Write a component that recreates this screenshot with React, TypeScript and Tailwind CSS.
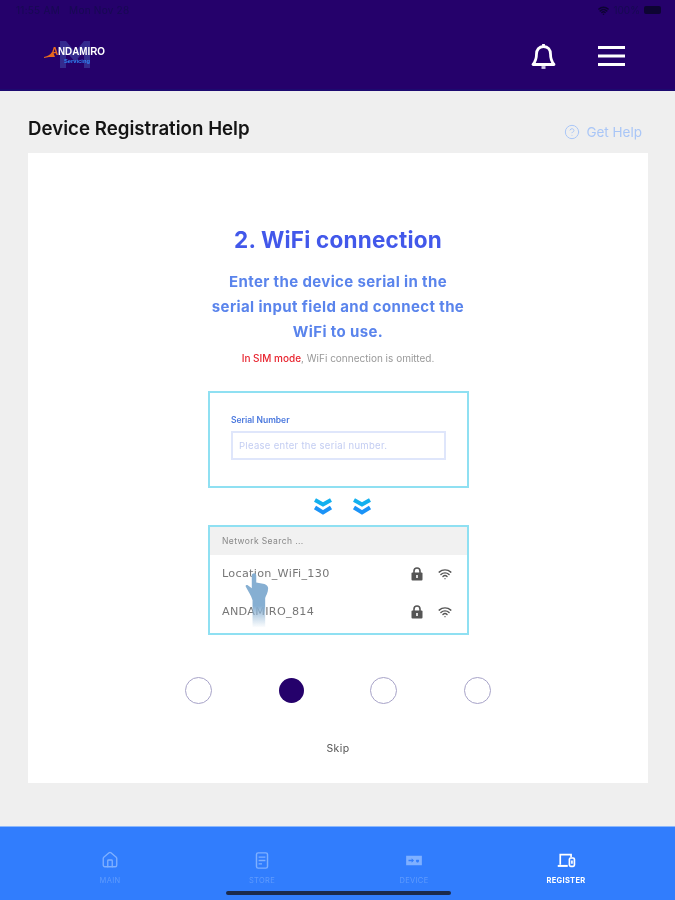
import { CircleHelp, House, Wifi } from "lucide-react";

const sans = "font-['Inter','Liberation_Sans',sans-serif]";

function Logo() {
  return (
    <svg width="64" height="30" viewBox="0 0 64 30" className="blur-[0.5px]">
      <path d="M16 28V1h6l9 11 9-11h6v27h-6V11l-9 11-9-11v17z" fill="#3a3d9c" opacity="0.7" />
      <path d="M0 17c4-1 6-2 8-5l1 0 2 5-6 0-5 1z" fill="#e8691f" />
      <text x="7" y="15" fontSize="10" fontWeight="800" fill="#e8691f" fontFamily="Liberation Sans">
        A
      </text>
      <text x="14" y="15" fontSize="10" fontWeight="800" fill="#fff" fontFamily="Liberation Sans" textLength="47" lengthAdjust="spacingAndGlyphs">
        NDAMIRO
      </text>
      <text x="20" y="23" fontSize="5" fontWeight="700" fill="#2f86f5" fontFamily="Liberation Sans" textLength="26" lengthAdjust="spacingAndGlyphs">
        Servicing
      </text>
    </svg>
  );
}

function BellIcon() {
  return (
    <svg width="25" height="26" viewBox="0 0 25 26" fill="none" stroke="#fff" strokeWidth="2.8" className="blur-[0.3px]">
      <path d="M12.5 1v2.5" />
      <path d="M12.5 3.5c-4.6 0-7 3.4-7 7.6 0 4.6-.6 7-3.5 10.4h21c-2.9-3.4-3.5-5.8-3.5-10.4 0-4.2-2.4-7.6-7-7.6z" strokeLinejoin="round" />
      <path d="M10.5 24.5h4" stroke="#cfc8e6" />
    </svg>
  );
}

function MenuIcon() {
  return (
    <svg width="27" height="20" viewBox="0 0 27 20" stroke="#fff" strokeWidth="2.8" className="blur-[0.2px]">
      <path d="M0 1.5h27M0 10h27M0 18.5h27" />
    </svg>
  );
}

function Header() {
  return (
    <header className="h-[91px] shrink-0 bg-[#25016b] border-b-2 border-[#1c0a70]">
      <div className="h-[20px] flex items-center justify-between pl-[16px] pr-[14px] text-[10px] text-[#170a52] blur-[0.6px]">
        <span className="tracking-wide">11:55 AM&nbsp;&nbsp;&nbsp;Mon Nov 28</span>
        <div className="flex items-center gap-[4px]">
          <Wifi size={11} strokeWidth={3.4} className="text-[#0d0433]" />
          <span>100%</span>
          <div className="w-[17px] h-[8px] rounded-[2px] bg-[#0d0433]" />
        </div>
      </div>
      <div className="h-[69px] flex items-center justify-between pl-[44px] pr-[50px]">
        <Logo />
        <div className="flex items-center gap-[42px] pt-[2px]">
          <BellIcon />
          <MenuIcon />
        </div>
      </div>
    </header>
  );
}

function Chevrons() {
  return (
    <svg width="20" height="17" viewBox="0 0 20 17" fill="none" strokeWidth="4" className="blur-[0.3px]">
      <path d="M2 2l8 4.5L18 2" stroke="#12b0ee" />
      <path d="M2 9.5l8 5 8-5" stroke="#1b93f7" />
    </svg>
  );
}

function Hand() {
  return (
    <svg width="24" height="58" viewBox="0 0 32 78" className="absolute left-[35px] top-[45px] blur-[0.6px]">
      <defs>
        <linearGradient id="hand" x1="0" y1="0" x2="0" y2="1">
          <stop offset="0.6" stopColor="#86afd2" />
          <stop offset="1" stopColor="#8fb6d6" stopOpacity="0" />
        </linearGradient>
      </defs>
      <path
        d="M11 2c2-1 4 0 4 3v9l11 2c3 1 5 3 5 6 0 6-3 10-4 13v40H10V38C8 31 4 26 1 20c-1-2 1-3 3-2l5 4V5c0-2 1-3 2-3z"
        fill="url(#hand)"
      />
    </svg>
  );
}

function LockIcon() {
  return (
    <svg width="12" height="14" viewBox="0 0 12 14">
      <path d="M3 6V4a3 3 0 0 1 6 0v2" fill="none" stroke="#555" strokeWidth="1.6" />
      <rect x="0.5" y="5.5" width="11" height="8" rx="1" fill="#555" />
      <rect x="5" y="8" width="2" height="3" fill="#ddd" />
    </svg>
  );
}

function NetworkRow({ name }: { name: string }) {
  return (
    <div className="h-[38px] flex items-center justify-between pl-[12px] pr-[15px] blur-[0.35px]">
      <span className="text-[11.2px] tracking-[0.3px] text-[#777] font-['DejaVu_Sans',sans-serif]">{name}</span>
      <div className="flex items-center gap-[15px] text-[#555]">
        <LockIcon />
        <Wifi size={14} strokeWidth={2.4} />
      </div>
    </div>
  );
}

function Dot({ active }: { active?: boolean }) {
  return (
    <div
      className={
        active
          ? "w-[25px] h-[25px] rounded-full bg-[#25016b]"
          : "w-[27px] h-[27px] rounded-full border-[1.5px] border-[#a7a3c8]"
      }
    />
  );
}

function HelpCard() {
  return (
    <section className="h-[630px] bg-white flex flex-col items-center pt-[73px]">
      <h2 className="h-[28px] leading-[28px] text-[22.5px] font-bold text-[#4258ea] tracking-[0.2px] blur-[0.2px]">2. WiFi connection</h2>
      <div className="mt-[15px] text-center text-[15px] leading-[25px] font-bold text-[#5a84ec] tracking-[0.37px] blur-[0.3px]">
        <p>Enter the device serial in the</p>
        <p>serial input field and connect the</p>
        <p>WiFi to use.</p>
      </div>
      <p className="mt-[6px] h-[16px] leading-[16px] text-[10px] text-[#999] blur-[0.3px]">
        <span className="text-[#e8232e] font-medium">In SIM mode</span>, WiFi connection is omitted.
      </p>

      <div className="mt-[25px] ml-[1px] w-[261px] h-[97px] border-2 border-[#8fe0f2] px-[21px] pt-[21px]">
        <p className="h-[12px] leading-[12px] text-[8.5px] font-semibold text-[#4a78de] blur-[0.25px]">Serial Number</p>
        <div className="mt-[5px] h-[29px] border-2 border-[#dfe6fb] flex items-center pl-[6px] pt-[2px] text-[9.5px] tracking-[0.3px] text-[#c3cdf2] blur-[0.3px]">
          Please enter the serial number.
        </div>
      </div>

      <div className="h-[37px] ml-[8px] flex items-center gap-[19px]">
        <Chevrons />
        <Chevrons />
      </div>

      <div className="relative ml-[1px] w-[261px] h-[110px] border-2 border-[#8fe0f2]">
        <div className="h-[28px] bg-[#f1f1f1] flex items-center pl-[12px] text-[8.5px] tracking-[0.4px] text-[#888] blur-[0.3px]">
          Network Search ...
        </div>
        <NetworkRow name="Location_WiFi_130" />
        <NetworkRow name="ANDAMIRO_814" />
        <Hand />
      </div>

      <div className="mt-[42px] w-[306px] flex items-center justify-between">
        <Dot />
        <Dot active />
        <Dot />
        <Dot />
      </div>

      <p className="mt-[38px] text-[10.5px] leading-[14px] tracking-[0.4px] text-[#555] blur-[0.2px]">Skip</p>
    </section>
  );
}

function TabItem({ label, active, children }: { label: string; active?: boolean; children: React.ReactNode }) {
  return (
    <div className={`w-[80px] flex flex-col items-center ${active ? "text-white" : "text-[#7fb0ff]"}`}>
      <div className="h-[24px] flex items-center justify-center">{children}</div>
      <span className={`mt-[4px] text-[7.5px] leading-[10px] tracking-[0.3px] blur-[0.3px] ${active ? "font-bold" : "text-[#5f9bfd]"}`}>{label}</span>
    </div>
  );
}

function TabBar() {
  return (
    <footer className="relative h-[74px] shrink-0 bg-[#317dfd] border-t border-[#8db8fb] pt-[21px] pl-[70px] pr-[69px] flex justify-between">
      <TabItem label="MAIN">
        <House size={18} strokeWidth={1.8} />
      </TabItem>
      <TabItem label="STORE">
        <svg width="14" height="17" viewBox="0 0 15 20" fill="none" stroke="currentColor" strokeWidth="1.7">
          <rect x="1" y="1" width="13" height="18" rx="2" />
          <path d="M3.5 6h8M3.5 10h8M3.5 14h4" />
        </svg>
      </TabItem>
      <TabItem label="DEVICE">
        <svg width="20" height="11" viewBox="0 0 20 14" fill="currentColor">
          <path d="M0 1h20v12H0zM3 6v2h4v2l3-3-3-3v2zm10 0a2 2 0 1 0 3 0z" fillRule="evenodd" />
        </svg>
      </TabItem>
      <TabItem label="REGISTER" active>
        <svg width="21" height="15" viewBox="0 0 21 18" fill="none" stroke="currentColor" strokeWidth="2">
          <path d="M3 14V2h13v3" />
          <path d="M0 15.5h12" strokeWidth="2.4" />
          <rect x="14" y="6" width="6" height="10" rx="1.5" />
          <path d="M17 9v4" />
        </svg>
      </TabItem>
      <div className="absolute left-[226px] bottom-[5px] w-[225px] h-[4px] rounded-full bg-[#1b2a4d]" />
    </footer>
  );
}

export default function App() {
  return (
    <div className={`w-[675px] h-[900px] flex flex-col overflow-hidden bg-[#efefef] ${sans}`}>
      <Header />
      <main className="flex-1 pl-[28px] pr-[27px]">
        <div className="h-[62px] flex items-end justify-between pb-[12px]">
          <h1 className="text-[18.7px] leading-[24px] font-semibold text-[#141414] blur-[0.2px]">Device Registration Help</h1>
          <div className="flex items-center gap-[6px] text-[13.5px] text-[#a9c6f7] pr-[6px] mb-[-1px] blur-[0.3px]">
            <CircleHelp size={16} strokeWidth={1.5} />
            <span>Get Help</span>
          </div>
        </div>
        <HelpCard />
      </main>
      <TabBar />
    </div>
  );
}
